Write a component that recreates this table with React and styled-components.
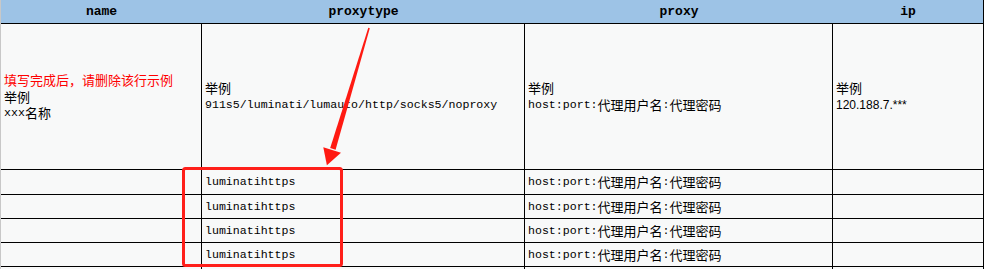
import React from 'react'
import styled, { createGlobalStyle } from 'styled-components';

const GlobalStyle = createGlobalStyle`
    body{
        margin: 0;
        background: #ffffff;
    }
`;

const columns = ['name', 'proxytype', 'proxy', 'ip'];

const rows = [
    { type: 'luminatihttps' },
    { type: 'luminatihttps' },
    { type: 'luminatihttps' },
    { type: 'luminatihttps' },
];

const rowHeights = [25, 24, 24, 24];

function ProxyLine() {
    return (
        <Line>host:port:<Han>代理用户名</Han>:<Han>代理密码</Han></Line>
    )
}

function Annotation() {
    return (
        <Overlay width="985" height="269" viewBox="0 0 985 269">
            <polygon
                points="368.3,27.8 369.8,28.2 335.6,149.7 330.2,148.1"
                fill="#ff1a12"
            />
            <polygon
                points="323.3,147.2 341,152.8 326.9,165.2"
                fill="#ff1a12"
            />
            <rect x="183.5" y="168.5" width="158" height="97" rx="2"
                fill="none" stroke="#ff1f1a" strokeWidth="3" />
        </Overlay>
    )
}

function App() {
    return (
        <>
            <GlobalStyle />
            <Page>
                <Sheet>
                    {columns.map((c, i) => (
                        <HeadCell key={c} $last={i === columns.length - 1}>{c}</HeadCell>
                    ))}

                    <Cell $h={146}>
                        <Line $red><Han>填写完成后，请删除该行示例</Han></Line>
                        <Line><Han>举例</Han></Line>
                        <Line>xxx<Han>名称</Han></Line>
                    </Cell>
                    <Cell $h={146}>
                        <Line><Han>举例</Han></Line>
                        <Line>911s5/luminati/lumauto/http/socks5/noproxy</Line>
                    </Cell>
                    <Cell $h={146}>
                        <Line><Han>举例</Han></Line>
                        <ProxyLine />
                    </Cell>
                    <Cell $h={146}>
                        <Line><Han>举例</Han></Line>
                        <Line $sans>120.188.7.***</Line>
                    </Cell>

                    {rows.map((r, i) => (
                        <React.Fragment key={i}>
                            <Cell $h={rowHeights[i]} />
                            <Cell $h={rowHeights[i]}><Line>{r.type}</Line></Cell>
                            <Cell $h={rowHeights[i]}><ProxyLine /></Cell>
                            <Cell $h={rowHeights[i]} />
                        </React.Fragment>
                    ))}

                    <Cell $h={24} />
                    <Cell $h={24} />
                    <Cell $h={24} />
                    <Cell $h={24} />
                </Sheet>
                <Annotation />
            </Page>
        </>
    )
}

const Page = styled.div`
    position: relative;
    width: 985px;
    height: 269px;
    overflow: hidden;
    background: #ffffff;
`;

const Sheet = styled.div`
    display: grid;
    grid-template-columns: 201px 323px 308px 151px;
    width: 983px;
    border-left: 1px solid #c8c8c8;
    background: #f8f9f9;
`;

const HeadCell = styled.div`
    height: 23px;
    line-height: 23px;
    background: #9dc3e6;
    border-bottom: 1px solid #000;
    border-right: ${p => p.$last ? '1px solid #000' : 'none'};
    text-align: center;
    font-family: "Liberation Mono", monospace;
    font-weight: bold;
    font-size: 13px;
    color: #000;
`;

const Cell = styled.div`
    box-sizing: border-box;
    height: ${p => p.$h}px;
    display: flex;
    flex-direction: column;
    justify-content: center;
    padding-left: 3px;
    border-right: 1px solid #000;
    border-bottom: 1px solid #000;
    font-family: "Liberation Mono", "Noto Sans CJK SC", monospace;
    font-size: 11.6px;
    color: #000;
    white-space: nowrap;
    overflow: hidden;
`;

const Line = styled.div`
    display: flex;
    align-items: center;
    height: 16.5px;
    line-height: 14px;
    color: ${p => p.$red ? '#ff0000' : '#000'};
    font-family: ${p => p.$sans ? '"Liberation Sans", Arial, sans-serif' : 'inherit'};
    font-size: ${p => p.$sans ? '12px' : 'inherit'};
`;

const Han = styled.span`
    font-family: "Noto Sans CJK SC", sans-serif;
    font-size: 13px;
    line-height: 14px;
`;

const Overlay = styled.svg`
    position: absolute;
    top: 0;
    left: 0;
    pointer-events: none;
`;

export default App;
